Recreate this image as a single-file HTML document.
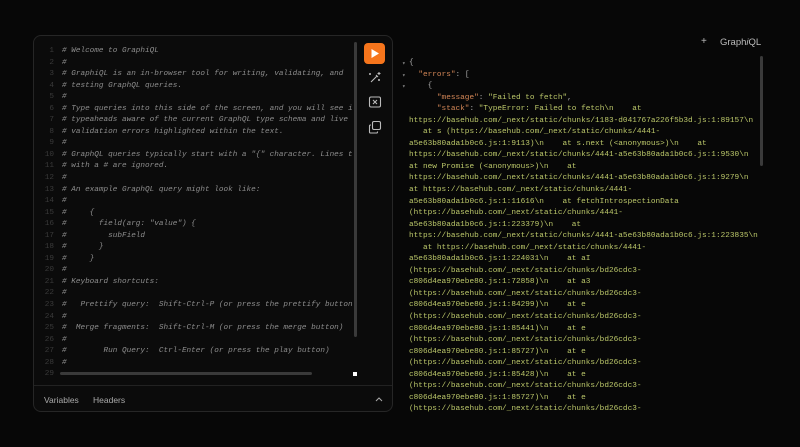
<!DOCTYPE html>
<html><head><style>
html,body{margin:0;padding:0;width:800px;height:447px;background:#070707;overflow:hidden}
body{position:relative;font-family:"Liberation Mono",monospace}
.panel{position:absolute;left:33px;top:35px;width:360px;height:377px;border:1px solid #262626;border-radius:8px;background:#0b0b0b;box-sizing:border-box}
.ed{position:absolute;left:0;top:10px;font-size:7.7px;line-height:11.55px;color:#8e8e8e;font-style:italic;white-space:pre;width:318px;height:330px;overflow:hidden}
.ln{display:inline-block;width:20px;text-align:right;color:#3a3a3a;font-style:normal;margin-right:8px}
.vs{position:absolute;left:320px;top:6px;width:3px;height:295px;background:#3a3a3a;border-radius:2px}
.hs{position:absolute;left:26px;top:336px;width:252px;height:3px;background:#3a3a3a;border-radius:2px}
.sq{position:absolute;left:319px;top:336px;width:4px;height:4px;background:#fff}
.run{position:absolute;left:330px;top:7px;width:21px;height:21px;background:#f6751c;border-radius:4px}
.foot{position:absolute;left:0;right:0;top:349px;border-top:1px solid #222;height:27px;font-family:"Liberation Sans",sans-serif;font-size:8.5px;color:#aaa}
.right{position:absolute;left:409px;top:58px;font-size:7.75px;line-height:11.55px;color:#bcc86a;white-space:pre}
.k{color:#d38656}.p{color:#aaa}
.a{position:absolute;left:402px;color:#888;font-size:6px}
</style></head><body>
<div class="panel">
<div class="ed"><span class="ln">1</span># Welcome to GraphiQL
<span class="ln">2</span>#
<span class="ln">3</span># GraphiQL is an in-browser tool for writing, validating, and
<span class="ln">4</span># testing GraphQL queries.
<span class="ln">5</span>#
<span class="ln">6</span># Type queries into this side of the screen, and you will see i
<span class="ln">7</span># typeaheads aware of the current GraphQL type schema and live
<span class="ln">8</span># validation errors highlighted within the text.
<span class="ln">9</span>#
<span class="ln">10</span># GraphQL queries typically start with a "{" character. Lines t
<span class="ln">11</span># with a # are ignored.
<span class="ln">12</span>#
<span class="ln">13</span># An example GraphQL query might look like:
<span class="ln">14</span>#
<span class="ln">15</span>#     {
<span class="ln">16</span>#       field(arg: "value") {
<span class="ln">17</span>#         subField
<span class="ln">18</span>#       }
<span class="ln">19</span>#     }
<span class="ln">20</span>#
<span class="ln">21</span># Keyboard shortcuts:
<span class="ln">22</span>#
<span class="ln">23</span>#   Prettify query:  Shift-Ctrl-P (or press the prettify button
<span class="ln">24</span>#
<span class="ln">25</span>#  Merge fragments:  Shift-Ctrl-M (or press the merge button)
<span class="ln">26</span>#
<span class="ln">27</span>#        Run Query:  Ctrl-Enter (or press the play button)
<span class="ln">28</span>#
<span class="ln">29</span>
</div>
<div class="vs"></div><div class="hs"></div><div class="sq"></div>
<div class="run"><svg width="21" height="21"><path d="M7.5 6 L15 10.5 L7.5 15Z" fill="#fff"/></svg></div>
<svg style="position:absolute;left:333px;top:33px" width="16" height="16" fill="none" stroke="#bbb" stroke-width="1.1"><path d="M4 13 L10 7 M9 6l2 2M12 3v3M10.5 4.5h3M3 4v2M2 5h2M12 10v2M11 11h2"/></svg>
<svg style="position:absolute;left:333px;top:58px" width="16" height="16" fill="none" stroke="#bbb" stroke-width="1.1"><rect x="2.5" y="3" width="11" height="10" rx="1.5"/><path d="M6 6l2 2 2-2M6 10l2-2 2 2"/></svg>
<svg style="position:absolute;left:333px;top:83px" width="16" height="16" fill="none" stroke="#bbb" stroke-width="1.1"><rect x="5.5" y="2.5" width="8" height="8" rx="1.5"/><path d="M10.5 12.5v.5a1 1 0 0 1-1 1h-6a1 1 0 0 1-1-1v-6a1 1 0 0 1 1-1h.5"/></svg>
<div class="foot"><span style="position:absolute;left:10px;top:9px">Variables</span><span style="position:absolute;left:59px;top:9px">Headers</span><svg style="position:absolute;left:341px;top:10px" width="8" height="6" fill="none" stroke="#aaa"><path d="M1 5l3-3 3 3"/></svg></div>
</div>
<div style="position:absolute;left:701px;top:36px;font-family:'Liberation Sans',sans-serif;font-size:10px;color:#bbb">+</div>
<div style="position:absolute;left:720px;top:37px;font-family:'Liberation Sans',sans-serif;font-size:9.5px;color:#bbb">Graph<i>i</i>QL</div>
<div style="position:absolute;left:760px;top:56px;width:3px;height:110px;background:#3a3a3a;border-radius:2px"></div>
<span class="a" style="top:60px">▾</span><span class="a" style="top:72px">▾</span><span class="a" style="top:83px">▾</span>
<div class="right"><span class="p">{</span>
  <span class="k">"errors"</span><span class="p">: [</span>
    <span class="p">{</span>
      <span class="k">"message"</span><span class="p">:</span> "Failed to fetch"<span class="p">,</span>
      <span class="k">"stack"</span><span class="p">:</span> "TypeError: Failed to fetch\n    at
https://basehub.com/_next/static/chunks/1183-d041767a226f5b3d.js:1:89157\n
   at s (https://basehub.com/_next/static/chunks/4441-
a5e63b80ada1b0c6.js:1:9113)\n    at s.next (&lt;anonymous&gt;)\n    at
https://basehub.com/_next/static/chunks/4441-a5e63b80ada1b0c6.js:1:9530\n
at new Promise (&lt;anonymous&gt;)\n    at
https://basehub.com/_next/static/chunks/4441-a5e63b80ada1b0c6.js:1:9279\n
at https://basehub.com/_next/static/chunks/4441-
a5e63b80ada1b0c6.js:1:11616\n    at fetchIntrospectionData
(https://basehub.com/_next/static/chunks/4441-
a5e63b80ada1b0c6.js:1:223379)\n    at
https://basehub.com/_next/static/chunks/4441-a5e63b80ada1b0c6.js:1:223835\n
   at https://basehub.com/_next/static/chunks/4441-
a5e63b80ada1b0c6.js:1:224031\n    at aI
(https://basehub.com/_next/static/chunks/bd26cdc3-
c806d4ea970ebe80.js:1:72858)\n    at a3
(https://basehub.com/_next/static/chunks/bd26cdc3-
c806d4ea970ebe80.js:1:84299)\n    at e
(https://basehub.com/_next/static/chunks/bd26cdc3-
c806d4ea970ebe80.js:1:85441)\n    at e
(https://basehub.com/_next/static/chunks/bd26cdc3-
c806d4ea970ebe80.js:1:85727)\n    at e
(https://basehub.com/_next/static/chunks/bd26cdc3-
c806d4ea970ebe80.js:1:85428)\n    at e
(https://basehub.com/_next/static/chunks/bd26cdc3-
c806d4ea970ebe80.js:1:85727)\n    at e
(https://basehub.com/_next/static/chunks/bd26cdc3-</div>
</body></html>
